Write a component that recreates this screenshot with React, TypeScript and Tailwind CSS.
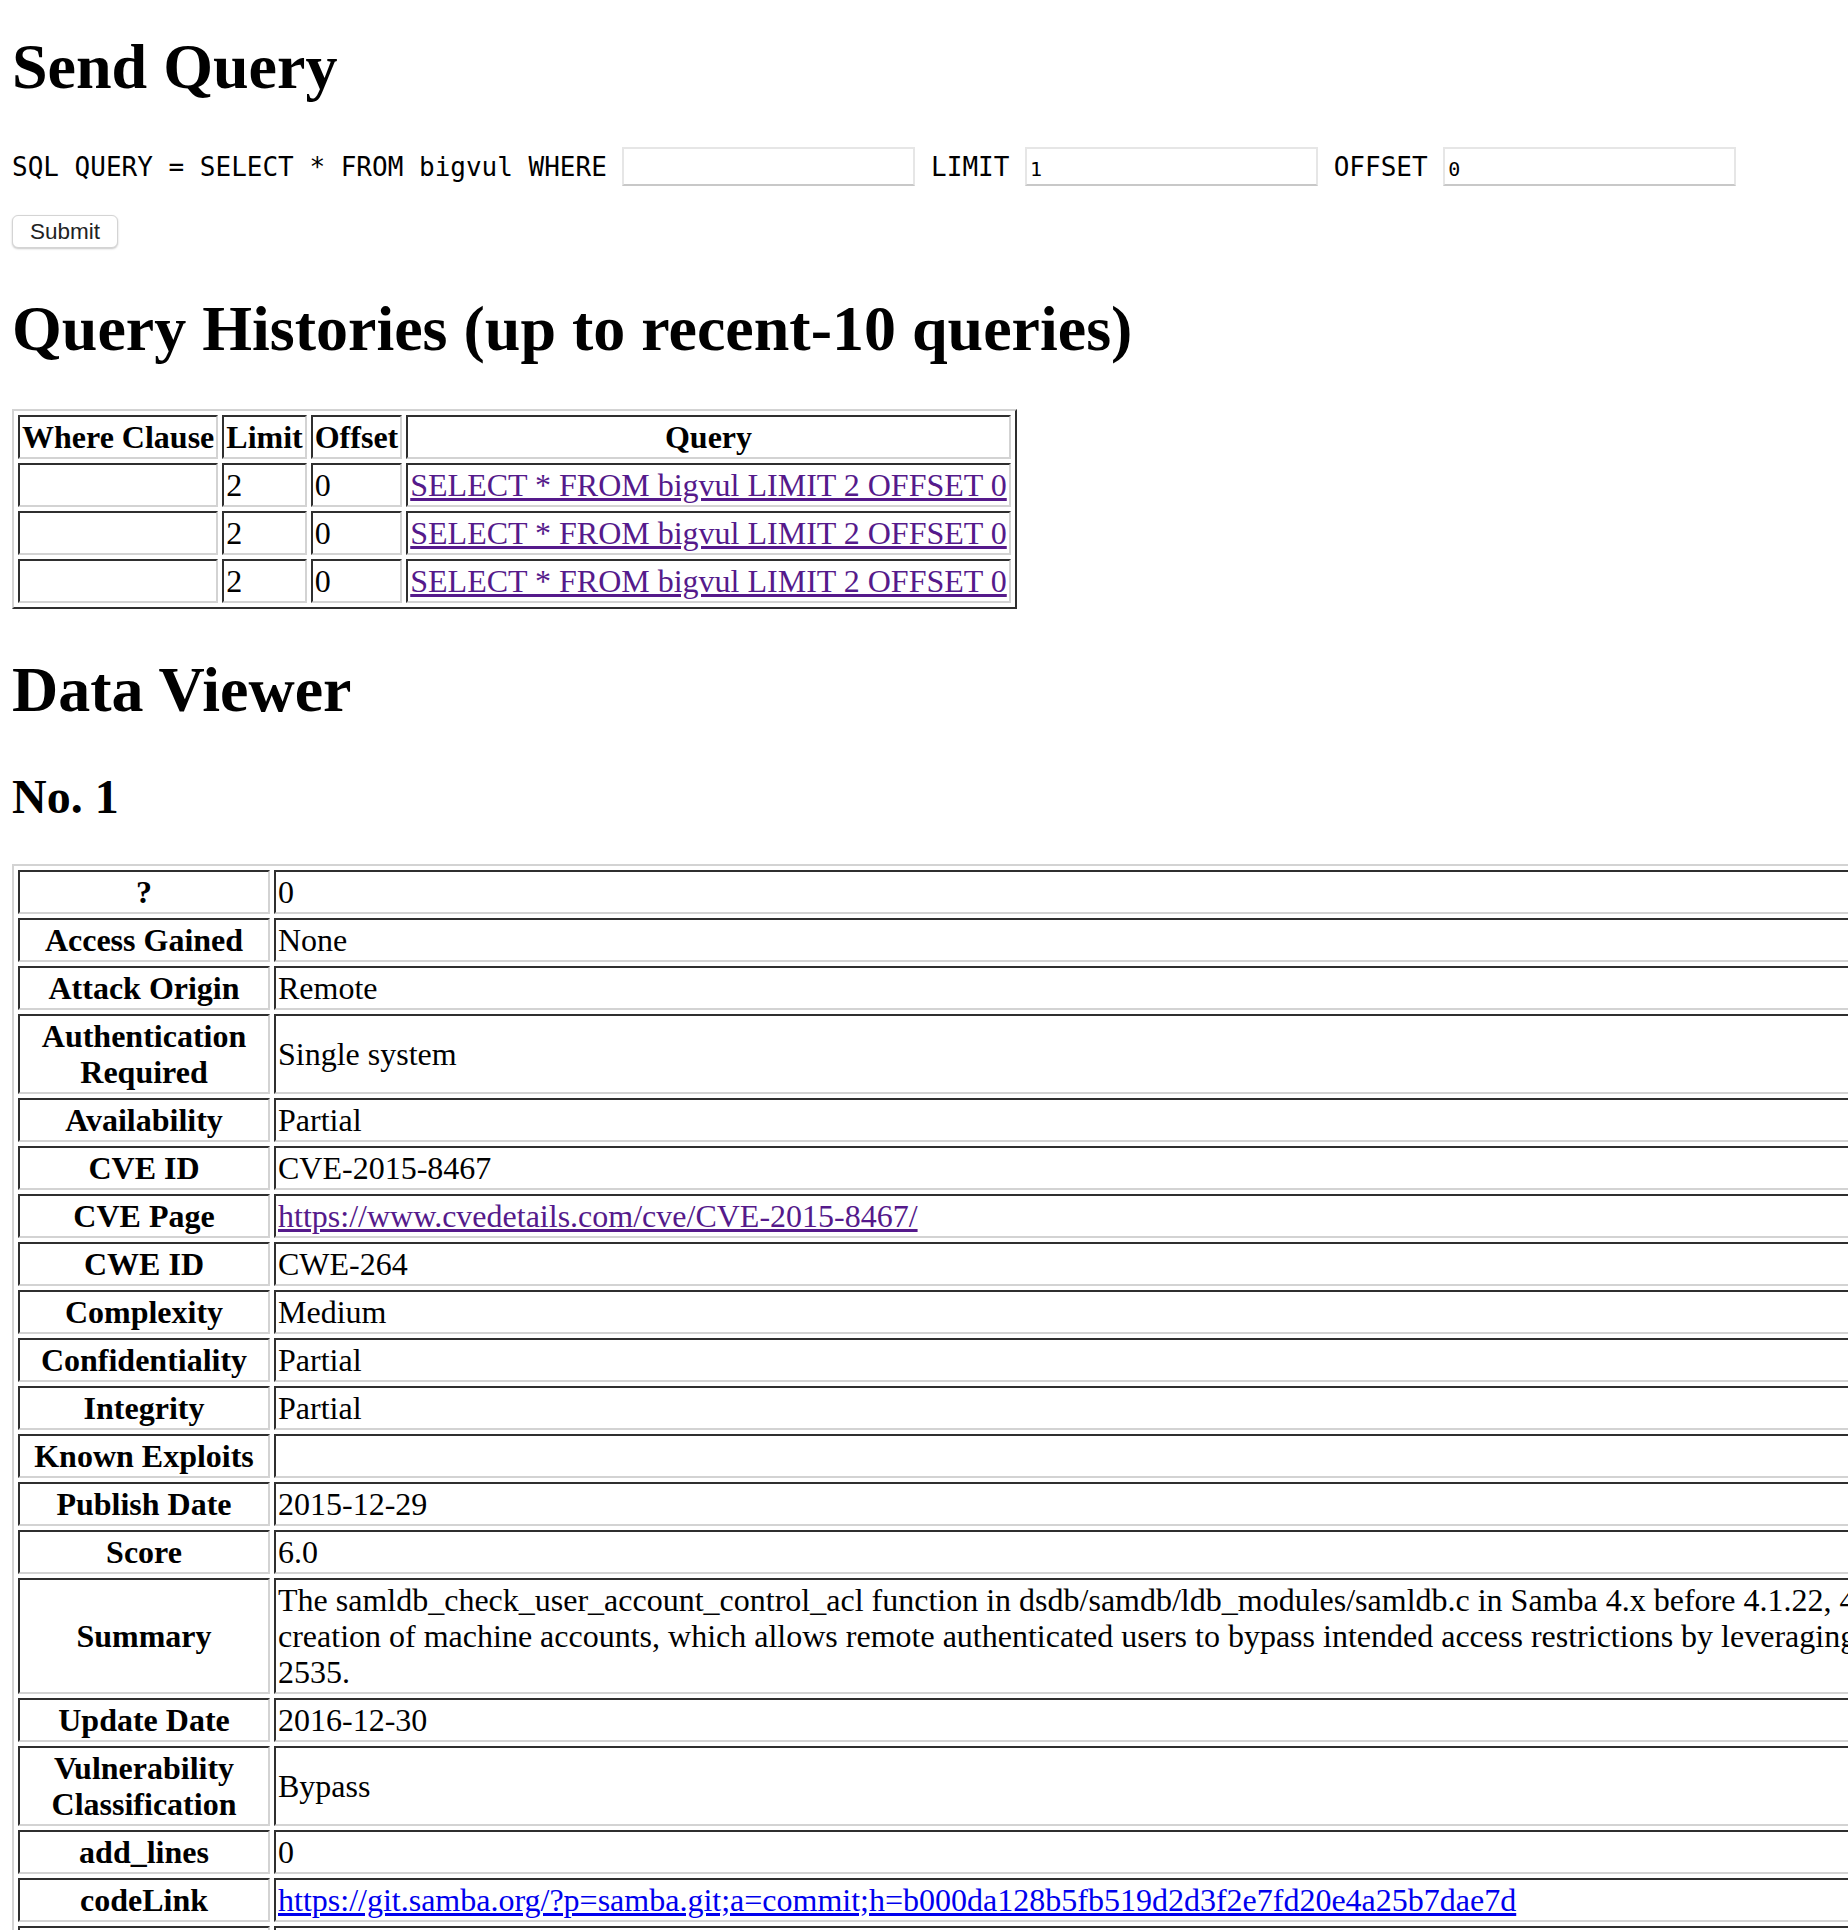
import React from "react";

const cellInset =
  "border-2 border-t-[#2f2f2f] border-l-[#2f2f2f] border-b-[#d3d3d3] border-r-[#d3d3d3] p-[2px] text-[32px] leading-[36px] align-middle";

const tableOutset =
  "border-separate border-spacing-[4px] border-2 border-t-[#d3d3d3] border-l-[#d3d3d3] border-b-[#2f2f2f] border-r-[#2f2f2f]";

const inputCls =
  "h-[39px] w-[293px] shrink-0 bg-white border-2 border-[#e6e6e6] border-b-[#c8c8c8] pl-[3px] pr-[2px] pt-[4px] pb-0 font-['DejaVu_Sans_Mono',monospace] text-[20px] text-black outline-none";

const visited = "text-[#551a8b] underline";
const link = "text-[#0000ee] underline";

type Row = { k: React.ReactNode; v: React.ReactNode };

const rows: Row[] = [
  { k: "?", v: "0" },
  { k: "Access Gained", v: "None" },
  { k: "Attack Origin", v: "Remote" },
  { k: "Authentication Required", v: "Single system" },
  { k: "Availability", v: "Partial" },
  { k: "CVE ID", v: "CVE-2015-8467" },
  {
    k: "CVE Page",
    v: (
      <a href="#" className={visited}>
        https://www.cvedetails.com/cve/CVE-2015-8467/
      </a>
    ),
  },
  { k: "CWE ID", v: "CWE-264" },
  { k: "Complexity", v: "Medium" },
  { k: "Confidentiality", v: "Partial" },
  { k: "Integrity", v: "Partial" },
  { k: "Known Exploits", v: "" },
  { k: "Publish Date", v: "2015-12-29" },
  { k: "Score", v: "6.0" },
  {
    k: "Summary",
    v: (
      <>
        The samldb_check_user_account_control_acl function in dsdb/samdb/ldb_modules/samldb.c in Samba 4.x before 4.1.22, 4.2.x before 4.2.7, and 4.3.x before 4.3.3 does not properly check for administrative privileges during
        <br />
        creation of machine accounts, which allows remote authenticated users to bypass intended access restrictions by leveraging the existence of a domain with both a Samba DC and a Windows DC, a similar issue to CVE-2015-
        <br />
        2535.
      </>
    ),
  },
  { k: "Update Date", v: "2016-12-30" },
  { k: "Vulnerability Classification", v: "Bypass" },
  { k: "add_lines", v: "0" },
  {
    k: "codeLink",
    v: (
      <a href="#" className={link}>
        https://git.samba.org/?p=samba.git;a=commit;h=b000da128b5fb519d2d3f2e7fd20e4a25b7dae7d
      </a>
    ),
  },
  { k: "commit_id", v: "b000da128b5fb519d2d3f2e7fd20e4a25b7dae7d" },
  { k: "commit_message", v: "" },
];

const history = [0, 1, 2];

export default function App() {
  return (
    <div className="h-[1930px] w-full overflow-hidden bg-white text-black font-['Liberation_Serif','Times_New_Roman',serif]">
      <div className="flex flex-col items-start pl-[12px] pt-[30px]">
        <h1 className="text-[64px] leading-[74px] font-bold">Send Query</h1>

        <div className="mt-[43px] flex items-center gap-[15.65px] font-['DejaVu_Sans_Mono',monospace] text-[26px] leading-[30px] whitespace-pre">
          <span>SQL QUERY = SELECT * FROM bigvul WHERE</span>
          <input className={inputCls} defaultValue="" />
          <span>LIMIT</span>
          <input className={inputCls} defaultValue="1" />
          <span>OFFSET</span>
          <input className={inputCls} defaultValue="0" />
        </div>

        <button className="mt-[29px] flex h-[33px] w-[106px] items-center justify-center rounded-[6px] border border-[#d4d4d4] bg-white font-['Liberation_Sans',Arial,sans-serif] text-[22.5px] text-[#222] shadow-[0_1px_2px_rgba(0,0,0,0.22)]">
          Submit
        </button>

        <h1 className="mt-[44px] text-[64px] leading-[74px] font-bold whitespace-nowrap">
          Query Histories (up to recent-10 queries)
        </h1>

        <table className={`mt-[43px] ${tableOutset}`}>
          <thead>
            <tr>
              <th className={`${cellInset} font-bold text-center whitespace-nowrap`}>Where Clause</th>
              <th className={`${cellInset} font-bold text-center`}>Limit</th>
              <th className={`${cellInset} font-bold text-center`}>Offset</th>
              <th className={`${cellInset} font-bold text-center`}>Query</th>
            </tr>
          </thead>
          <tbody>
            {history.map((i) => (
              <tr key={i}>
                <td className={`${cellInset} text-left`}></td>
                <td className={`${cellInset} text-left`}>2</td>
                <td className={`${cellInset} text-left`}>0</td>
                <td className={`${cellInset} text-left whitespace-nowrap`}>
                  <a href="#" className={visited}>
                    SELECT * FROM bigvul LIMIT 2 OFFSET 0
                  </a>
                </td>
              </tr>
            ))}
          </tbody>
        </table>

        <h1 className="mt-[44px] text-[64px] leading-[74px] font-bold">Data Viewer</h1>

        <h2 className="mt-[42px] text-[48px] leading-[56px] font-bold">No. 1</h2>

        <table className={`mt-[39px] ${tableOutset}`}>
          <tbody>
            {rows.map((r, i) => (
              <tr key={i}>
                <th className={`${cellInset} font-bold text-center`}>
                  <div className="w-[244px]">{r.k}</div>
                </th>
                <td className={`${cellInset} text-left whitespace-nowrap`}>{r.v}</td>
              </tr>
            ))}
          </tbody>
        </table>
      </div>
    </div>
  );
}
